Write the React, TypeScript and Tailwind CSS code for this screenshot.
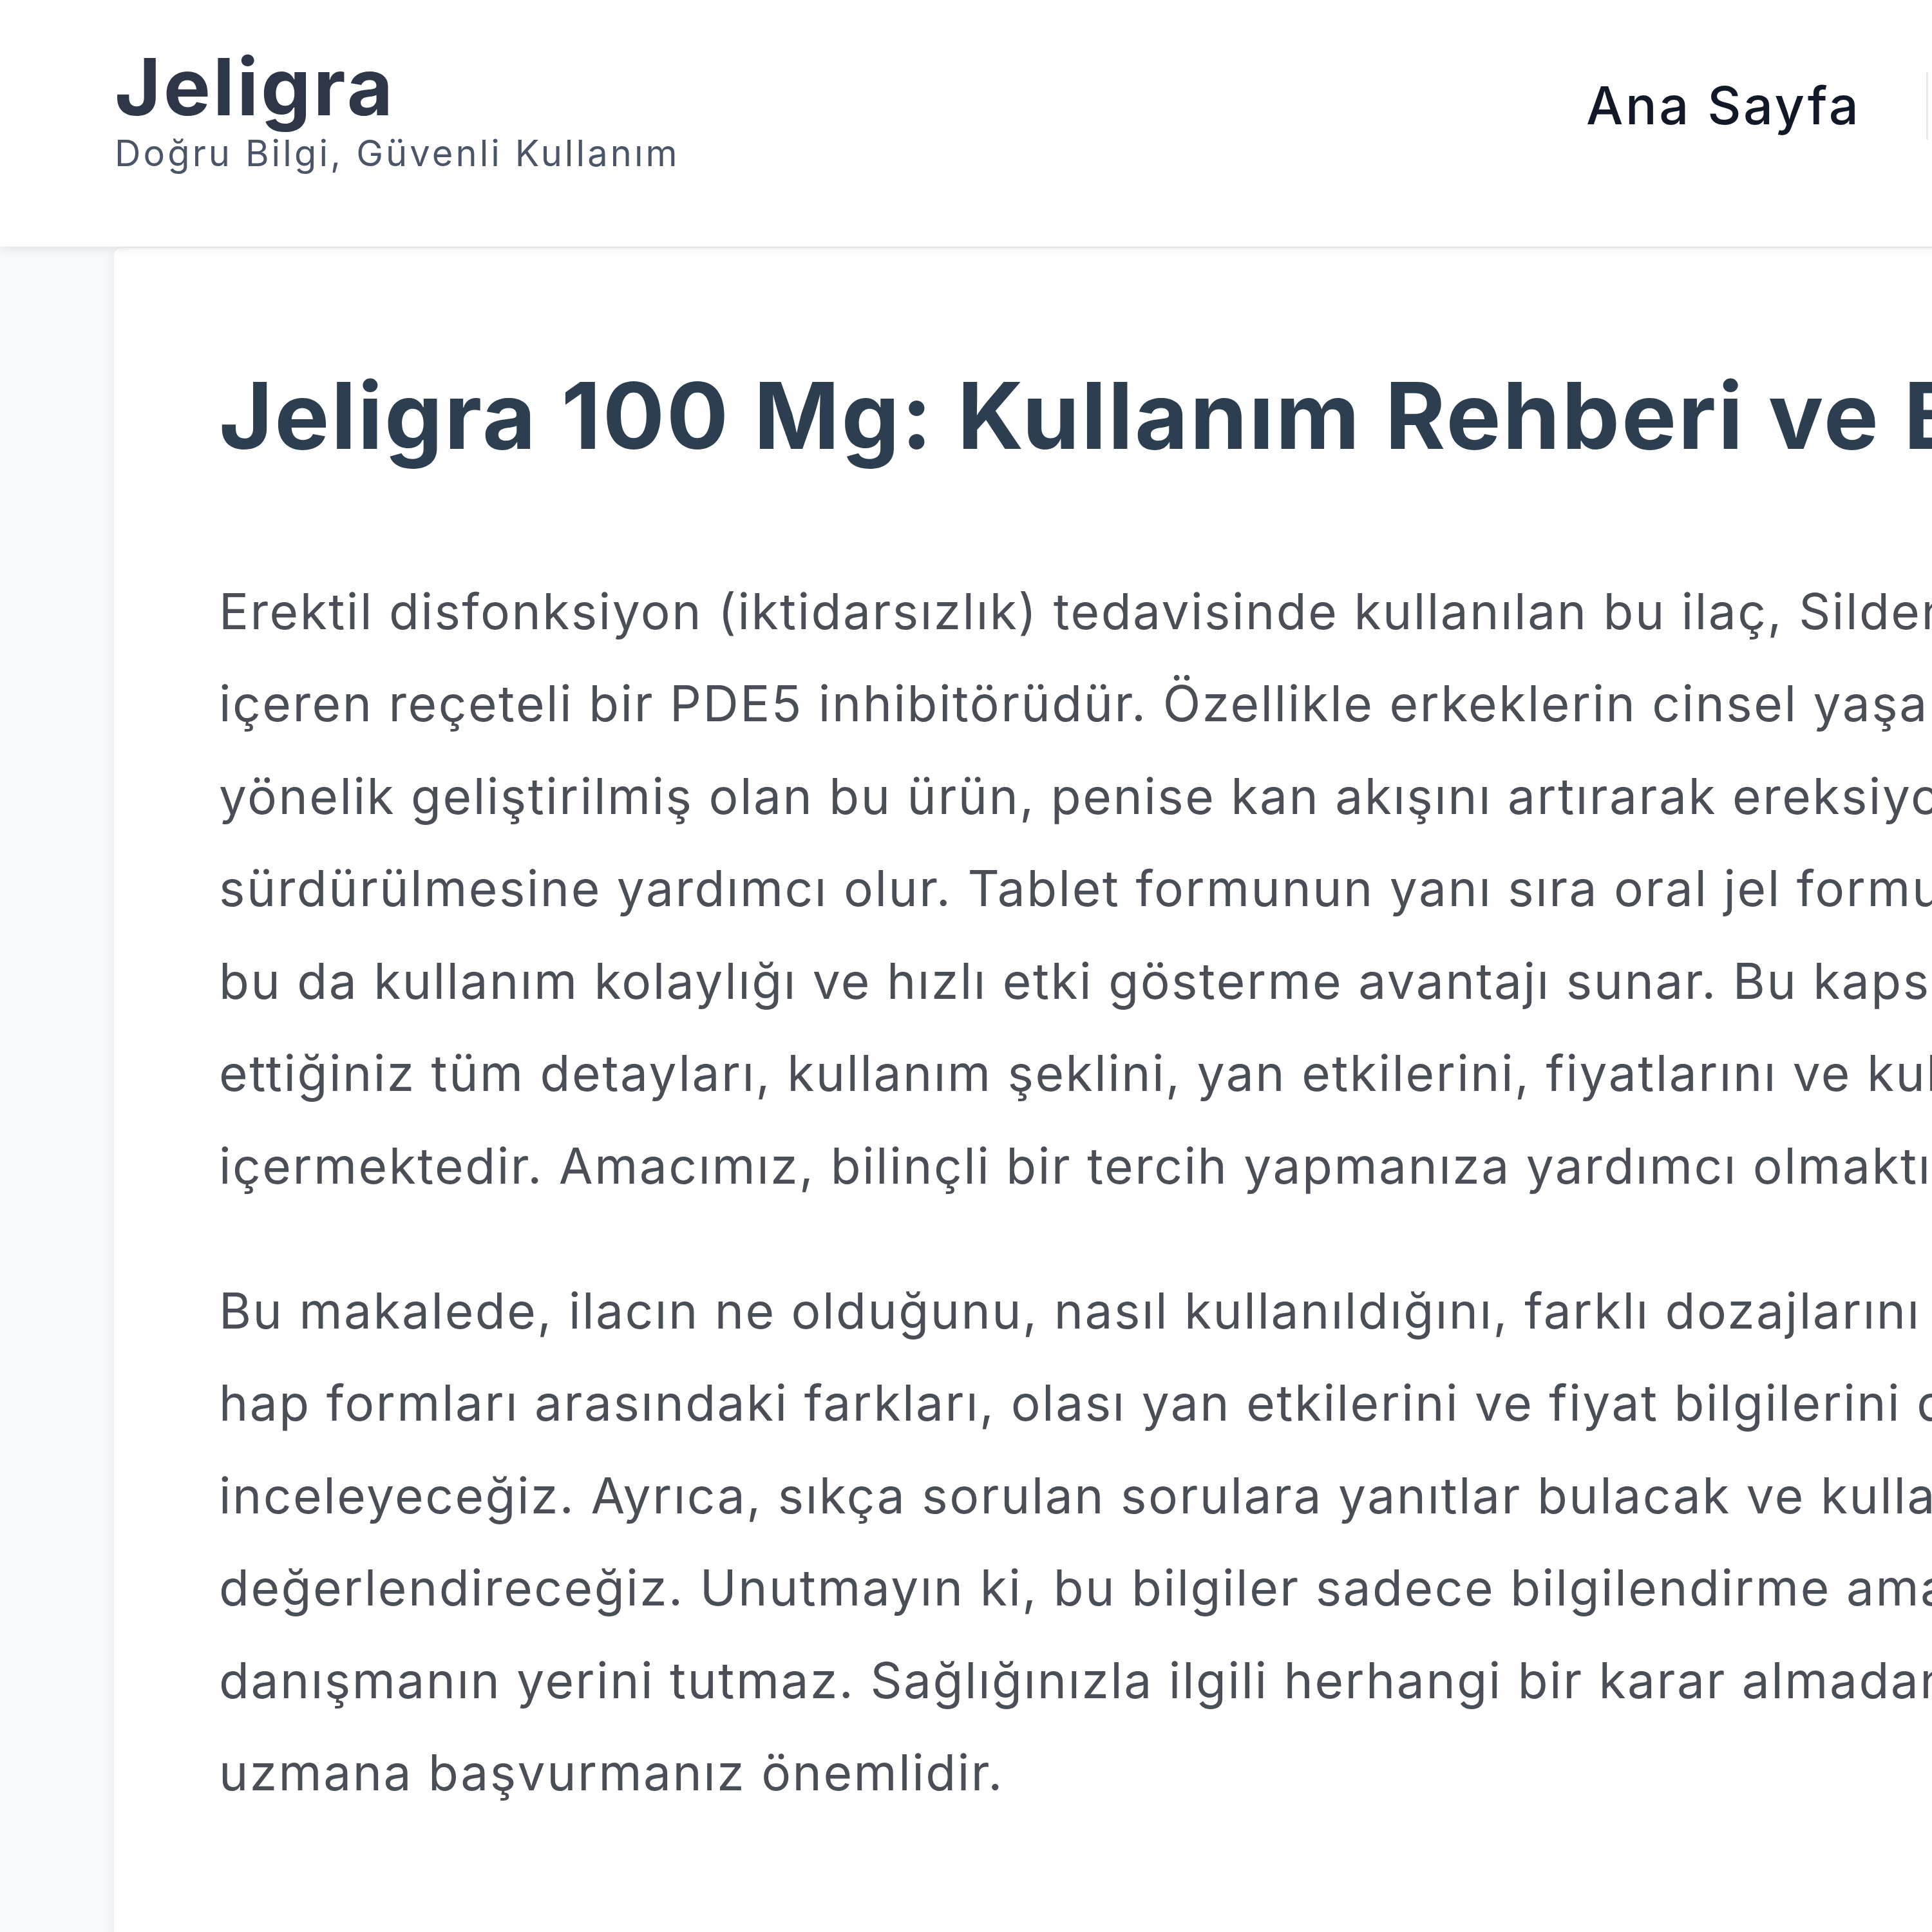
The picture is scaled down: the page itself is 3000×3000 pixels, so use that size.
import React from "react";

const para1 = [
  "Erektil disfonksiyon (iktidarsızlık) tedavisinde kullanılan bu ilaç, Sildenafil Sitrat",
  "içeren reçeteli bir PDE5 inhibitörüdür. Özellikle erkeklerin cinsel yaşam kalitesini",
  "yönelik geliştirilmiş olan bu ürün, penise kan akışını artırarak ereksiyonun sağlanmasına",
  "sürdürülmesine yardımcı olur. Tablet formunun yanı sıra oral jel formunda da bulunur;",
  "bu da kullanım kolaylığı ve hızlı etki gösterme avantajı sunar. Bu kapsamda merak",
  "ettiğiniz tüm detayları, kullanım şeklini, yan etkilerini, fiyatlarını ve kullanıcı yorumlarını",
  "içermektedir. Amacımız, bilinçli bir tercih yapmanıza yardımcı olmaktır.",
];

const para2 = [
  "Bu makalede, ilacın ne olduğunu, nasıl kullanıldığını, farklı dozajlarını (50 mg, 100 mg)",
  "hap formları arasındaki farkları, olası yan etkilerini ve fiyat bilgilerini detaylı bir şekilde",
  "inceleyeceğiz. Ayrıca, sıkça sorulan sorulara yanıtlar bulacak ve kullanıcı deneyimlerini",
  "değerlendireceğiz. Unutmayın ki, bu bilgiler sadece bilgilendirme amaçlıdır ve bir sağlık",
  "danışmanın yerini tutmaz. Sağlığınızla ilgili herhangi bir karar almadan önce mutlaka bir",
  "uzmana başvurmanız önemlidir.",
];

export default function App() {
  return (
    <div className="w-[3000px] h-[3000px] overflow-hidden bg-[#f8f9fa] font-['Inter',sans-serif]">
      <header className="relative z-10 h-[383px] w-[3600px] bg-white shadow-[0_4px_14px_rgba(0,0,0,0.09)] flex items-center pb-[44px] pl-[178px]">
        <div className="w-[2285px] shrink-0 flex flex-col gap-[14px]">
          <div className="text-[123px] leading-[123px] font-bold tracking-[3.8px] text-[#2d3748]">Jeligra</div>
          <div className="text-[56px] leading-[56px] tracking-[4.1px] text-[#4a5568]">Doğru Bilgi, Güvenli Kullanım</div>
        </div>
        <nav className="flex items-center shrink-0 mb-[10px]">
          <a className="text-[81px] leading-[81px] font-medium tracking-[3.6px] text-[#111827] whitespace-nowrap">Ana Sayfa</a>
          <div className="ml-[102px] w-[3px] h-[105px] bg-[#e5e7eb]" />
          <a className="ml-[100px] text-[81px] leading-[81px] font-medium tracking-[3.6px] text-[#111827] whitespace-nowrap">Hakkında</a>
        </nav>
      </header>
      <main className="pl-[177px] pt-[2px]">
        <article className="w-[3400px] min-h-[2700px] bg-white rounded-tl-[12px] shadow-[0_0_18px_rgba(0,0,0,0.07)] pl-[163px] pt-[174px]">
          <h1 className="text-[143px] leading-[171.6px] font-bold tracking-[2.7px] text-[#2c3e50] whitespace-nowrap mb-[147px]">
            Jeligra 100 Mg: Kullanım Rehberi ve Bilgilendirme
          </h1>
          <p className="text-[76.6px] leading-[143.5px] tracking-[2.5px] text-[#4a4f57] mb-[81.5px]">
            {para1.map((l) => (
              <span key={l} className="block whitespace-nowrap">{l}</span>
            ))}
          </p>
          <p className="text-[76.6px] leading-[143.5px] tracking-[2.5px] text-[#4a4f57]">
            {para2.map((l) => (
              <span key={l} className="block whitespace-nowrap">{l}</span>
            ))}
          </p>
        </article>
      </main>
    </div>
  );
}
